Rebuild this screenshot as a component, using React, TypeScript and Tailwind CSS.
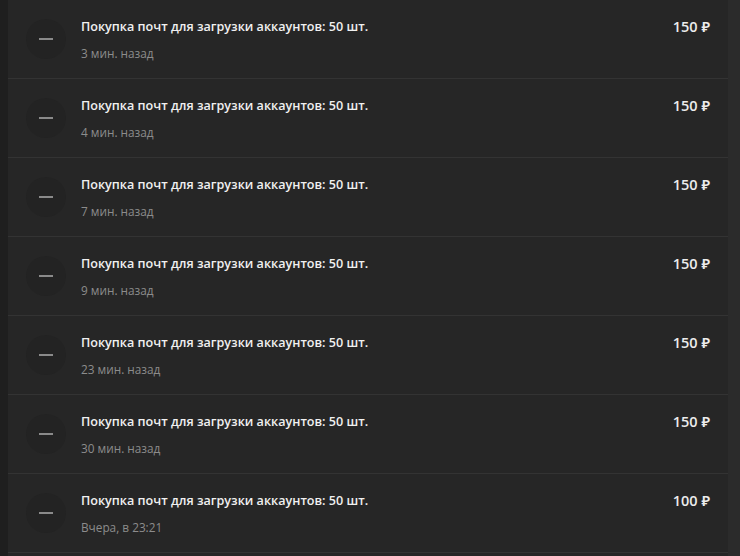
const rows = [
  { time: "3 мин. назад", price: "150 ₽" },
  { time: "4 мин. назад", price: "150 ₽" },
  { time: "7 мин. назад", price: "150 ₽" },
  { time: "9 мин. назад", price: "150 ₽" },
  { time: "23 мин. назад", price: "150 ₽" },
  { time: "30 мин. назад", price: "150 ₽" },
  { time: "Вчера, в 23:21", price: "100 ₽" },
]

export default function App() {
  return (
    <div
      className="h-[556px] w-[740px] overflow-hidden bg-[#1f1f1f] flex"
      style={{ fontFamily: '"Open Sans", "Noto Sans", sans-serif' }}
    >
      <div className="ml-2 w-[720px] bg-[#262626]">
        {rows.map((row, i) => (
          <div key={i} className="h-[79px] flex border-b border-[#333333] pl-[18px] pr-[18px]">
            <div className="mt-[19px] w-10 h-10 rounded-full bg-[#232323] flex items-center justify-center shrink-0">
              <div className="w-[14px] h-[2px] bg-[#8a8a8a]" />
            </div>
            <div className="ml-[15px] pt-[17px] flex-1">
              <div className="text-[12.6px] leading-[20px] font-semibold text-[#f0f0f0]">
                Покупка почт для загрузки аккаунтов: 50 шт.
              </div>
              <div className="mt-[7px] text-[11.8px] leading-[18px] text-[#8c8c8c]">{row.time}</div>
            </div>
            <div className="pt-[17px] text-[14.5px] leading-[20px] font-semibold text-[#ececec]">
              {row.price}
            </div>
          </div>
        ))}
      </div>
      <div className="flex-1 bg-[#2b2b2b]" />
    </div>
  )
}
